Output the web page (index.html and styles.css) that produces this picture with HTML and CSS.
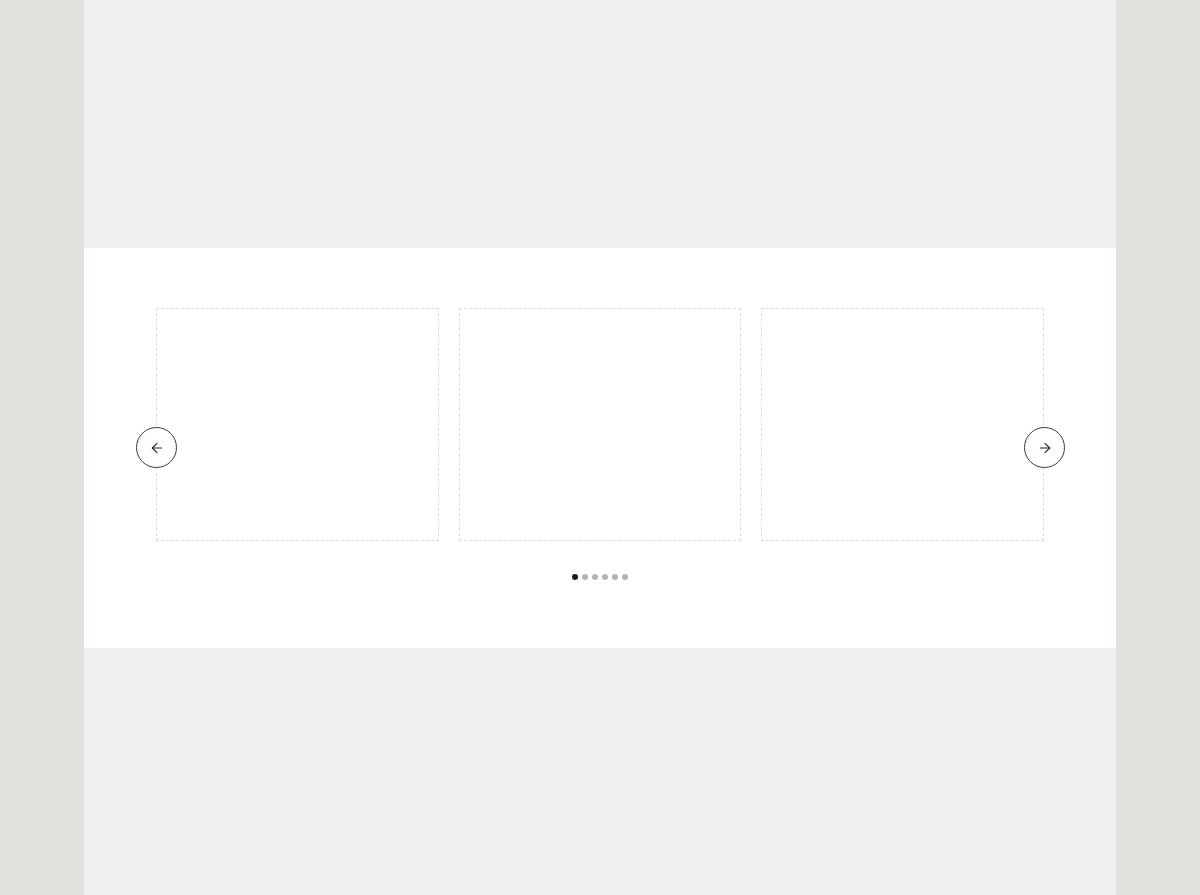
FILE: index.html
```html
<!DOCTYPE html>
<html lang="en">
<head>
<meta charset="utf-8">
<title>Carousel</title>
<link rel="stylesheet" href="styles.css">
</head>
<body>
<div class="page">
  <section class="carousel">
    <div class="track">
      <div class="slide"></div>
      <div class="slide"></div>
      <div class="slide"></div>
    </div>
    <div class="dots">
      <span class="dot active"></span>
      <span class="dot"></span>
      <span class="dot"></span>
      <span class="dot"></span>
      <span class="dot"></span>
      <span class="dot"></span>
    </div>
    <button class="nav prev" aria-label="Previous">
      <svg width="16" height="16" viewBox="0 0 24 24" fill="none" stroke="currentColor" stroke-width="1.6" stroke-linecap="round" stroke-linejoin="round"><path d="M19 12H5"/><path d="M12 19l-7-7 7-7"/></svg>
    </button>
    <button class="nav next" aria-label="Next">
      <svg width="16" height="16" viewBox="0 0 24 24" fill="none" stroke="currentColor" stroke-width="1.6" stroke-linecap="round" stroke-linejoin="round"><path d="M5 12h14"/><path d="M12 5l7 7-7 7"/></svg>
    </button>
  </section>
</div>
</body>
</html>
```

FILE: styles.css
```css
html, body {
  margin: 0;
  padding: 0;
}
body {
  background: #e4e2de;
  font-family: "Liberation Sans", Arial, sans-serif;
}
.page {
  width: 1032px;
  margin: 0 auto;
  min-height: 895px;
  background: #f0efed;
  padding-top: 248px;
  box-sizing: border-box;
}
.carousel {
  position: relative;
  height: 400px;
  background: #ffffff;
  padding: 60px 72px 0;
  box-sizing: border-box;
}
.track {
  display: grid;
  grid-template-columns: repeat(3, 1fr);
  gap: 20px;
}
.slide {
  height: 233px;
  border: 1px dashed #dcdcdc;
  box-sizing: border-box;
}
.dots {
  display: flex;
  justify-content: center;
  gap: 4px;
  margin-top: 33px;
}
.dot {
  width: 6px;
  height: 6px;
  border-radius: 50%;
  background: #b2b2b2;
}
.dot.active {
  background: #1e1e1e;
}
.nav {
  position: absolute;
  top: 179px;
  width: 41px;
  height: 41px;
  border-radius: 50%;
  border: 1px solid #3a3a3a;
  background: #ffffff;
  color: #222;
  padding: 0;
  display: flex;
  align-items: center;
  justify-content: center;
  cursor: pointer;
}
.prev { left: 52px; }
.next { right: 51px; }
```
